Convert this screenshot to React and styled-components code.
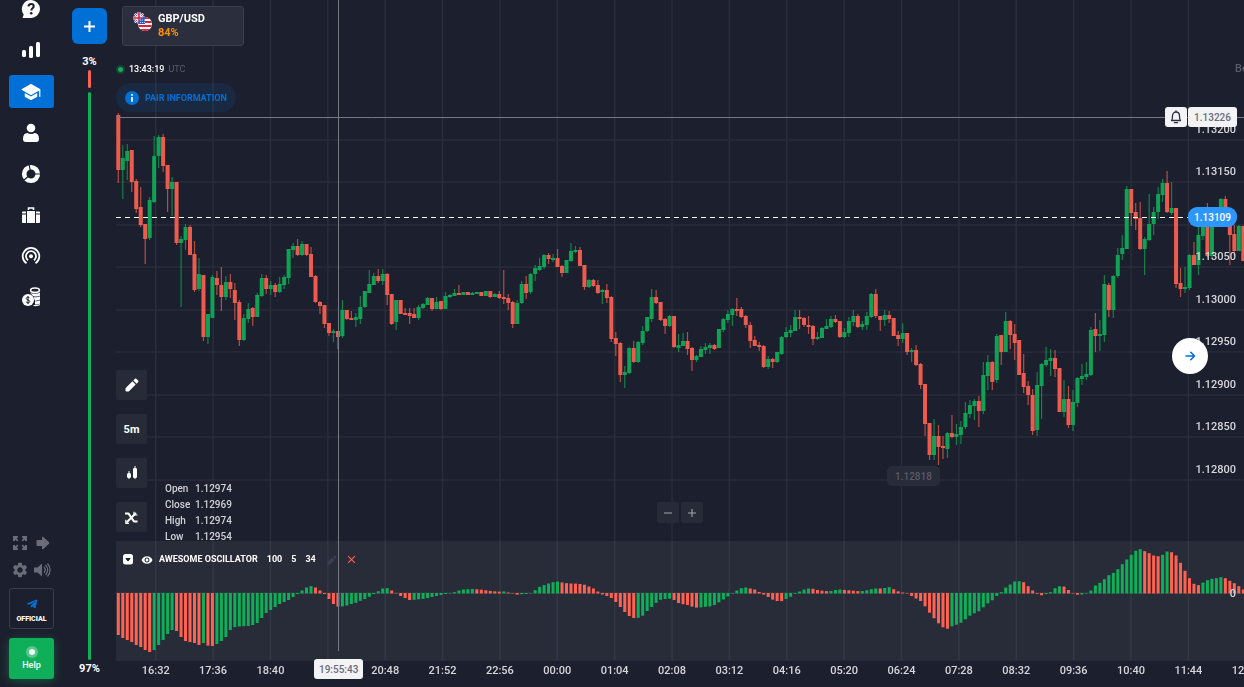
import React from 'react';
import styled, { createGlobalStyle } from 'styled-components';
import { MdClose, MdSettings, MdVisibility } from 'react-icons/md';
import { FaTelegramPlane } from 'react-icons/fa';
import { IoSchool } from 'react-icons/io5';

const colors = {
  bg: '#1c1f2d',
  blue: '#0070d6',
  green: '#0faf59',
  red: '#ff6251',
  muted: '#6a6d78',
  grid: '#2a2d3a',
  label: '#d6d7da',
};

// candle: [open, close, high, low], measured down from the top of the chart
const candles = [
  [115, 170, 113, 183], [170, 158, 145, 199], [161, 151, 144, 180], [150, 182, 150, 192], [181, 209, 179, 213],
  [207, 225, 187, 227], [224, 239, 224, 264], [238, 200, 197, 240], [202, 156, 136, 203], [156, 137, 135, 168],
  [137, 166, 134, 172], [165, 189, 165, 212], [189, 182, 177, 216], [182, 243, 182, 245], [243, 239, 236, 307],
  [240, 227, 224, 250], [227, 255, 225, 255], [254, 290, 241, 292], [289, 274, 258, 291], [275, 337, 275, 341],
  [337, 314, 314, 344], [318, 277, 275, 318], [278, 285, 271, 295], [285, 297, 267, 311], [297, 282, 276, 300],
  [282, 289, 274, 298], [290, 303, 283, 320], [302, 340, 300, 346], [340, 318, 314, 341], [319, 309, 303, 323],
  [308, 317, 307, 326], [317, 295, 293, 317], [296, 278, 274, 297], [278, 289, 275, 294], [289, 285, 281, 295],
  [285, 292, 283, 297], [292, 284, 277, 293], [285, 277, 275, 289], [278, 249, 249, 284], [250, 246, 243, 258],
  [246, 255, 239, 256], [255, 244, 241, 256], [244, 255, 244, 256], [254, 277, 247, 277], [276, 302, 275, 303],
  [302, 306, 301, 314], [305, 324, 305, 328], [323, 333, 323, 336], [333, 331, 329, 342], [331, 337, 331, 349],
  [336, 310, 300, 338], [310, 319, 310, 320], [318, 320, 311, 320], [320, 317, 313, 327], [319, 307, 296, 324],
  [307, 291, 291, 308], [293, 284, 270, 293], [285, 276, 273, 285], [276, 281, 269, 283], [281, 274, 269, 285],
  [274, 295, 273, 305], [294, 324, 294, 325], [322, 300, 300, 330], [300, 314, 300, 314], [313, 315, 308, 315],
  [313, 316, 308, 324], [314, 318, 308, 318], [318, 307, 305, 320], [308, 304, 303, 309], [305, 298, 297, 305],
  [298, 309, 298, 311], [309, 302, 297, 309], [301, 309, 301, 310], [309, 296, 292, 309], [297, 295, 294, 298],
  [296, 293, 289, 296], [293, 295, 285, 295], [295, 292, 292, 295], [292, 295, 292, 295], [295, 293, 292, 295],
  [294, 292, 292, 294], [292, 296, 292, 296], [296, 291, 291, 296], [291, 297, 291, 298], [297, 294, 293, 297],
  [294, 298, 291, 299], [297, 299, 270, 304], [298, 303, 294, 310], [302, 324, 301, 328], [324, 303, 300, 324],
  [303, 284, 281, 304], [284, 293, 276, 299], [292, 274, 273, 294], [274, 268, 265, 281], [270, 266, 258, 271],
  [267, 255, 254, 269], [255, 259, 253, 264], [260, 258, 254, 262], [258, 267, 249, 267], [266, 273, 265, 277],
  [273, 260, 260, 273], [261, 251, 243, 262], [252, 250, 246, 253], [250, 266, 247, 266], [265, 287, 265, 290],
  [287, 280, 279, 288], [280, 286, 279, 287], [285, 293, 280, 294], [292, 290, 289, 304], [290, 298, 284, 303],
  [297, 339, 296, 342], [338, 344, 332, 356], [343, 375, 342, 382], [375, 372, 366, 388], [373, 348, 347, 374],
  [348, 362, 341, 363], [362, 342, 341, 363], [343, 331, 326, 345], [331, 317, 317, 332], [319, 297, 289, 322],
  [297, 303, 290, 304], [302, 320, 302, 321], [319, 326, 318, 334], [326, 316, 315, 327], [316, 347, 316, 348],
  [348, 345, 334, 352], [346, 341, 333, 346], [341, 349, 332, 355], [348, 360, 347, 371], [360, 356, 355, 362],
  [357, 349, 346, 357], [350, 347, 343, 354], [348, 345, 343, 354], [345, 349, 344, 350], [348, 329, 329, 348],
  [330, 319, 318, 332], [320, 314, 310, 323], [315, 309, 308, 326], [309, 311, 298, 316], [309, 317, 307, 318],
  [316, 325, 315, 328], [325, 341, 322, 348], [340, 346, 336, 346], [345, 347, 342, 351], [346, 367, 345, 368],
  [367, 359, 356, 369], [359, 362, 358, 368], [362, 352, 352, 363], [354, 337, 336, 355], [337, 332, 327, 338],
  [333, 330, 325, 337], [331, 317, 310, 331], [317, 319, 310, 329], [318, 325, 317, 327], [325, 327, 316, 334],
  [326, 339, 325, 345], [339, 337, 332, 340], [338, 328, 327, 338], [329, 326, 319, 329], [327, 319, 316, 328],
  [319, 322, 315, 323], [321, 337, 321, 338], [337, 332, 328, 338], [333, 321, 317, 337], [322, 316, 310, 326],
  [316, 327, 314, 328], [327, 324, 321, 330], [325, 316, 312, 330], [317, 294, 293, 318], [294, 316, 289, 318],
  [316, 320, 316, 331], [320, 315, 310, 326], [315, 319, 311, 323], [318, 336, 318, 336], [335, 339, 331, 346],
  [339, 333, 323, 343], [333, 352, 333, 355], [352, 350, 348, 362], [350, 365, 345, 366], [364, 385, 363, 389],
  [384, 424, 384, 436], [423, 455, 423, 460], [455, 436, 419, 460], [436, 447, 425, 465], [446, 448, 436, 459],
  [449, 433, 432, 458], [433, 437, 415, 438], [437, 434, 424, 445], [435, 427, 421, 444], [427, 413, 402, 429],
  [414, 405, 400, 418], [406, 401, 399, 420], [401, 411, 396, 427], [411, 375, 362, 414], [376, 362, 355, 390],
  [362, 382, 361, 390], [380, 336, 334, 383], [335, 352, 335, 365], [352, 321, 312, 352], [321, 335, 320, 349],
  [334, 343, 324, 360], [340, 375, 340, 375], [373, 387, 354, 393], [386, 395, 381, 405], [395, 431, 389, 435],
  [430, 385, 372, 436], [386, 364, 363, 419], [365, 360, 347, 367], [361, 358, 349, 376], [358, 369, 350, 377],
  [368, 412, 368, 412], [412, 399, 380, 417], [399, 425, 386, 428], [425, 402, 390, 431], [403, 378, 377, 407],
  [379, 376, 364, 385], [377, 374, 362, 380], [375, 330, 327, 376], [329, 336, 313, 352], [336, 334, 320, 351],
  [335, 284, 275, 342], [285, 310, 283, 317], [310, 276, 275, 318], [276, 255, 248, 278], [254, 248, 235, 260],
  [249, 189, 186, 249], [189, 213, 189, 226], [212, 219, 203, 230], [218, 249, 202, 250], [249, 239, 237, 275],
  [240, 224, 194, 241], [224, 212, 207, 235], [212, 194, 187, 219], [195, 183, 179, 202], [183, 212, 171, 213],
  [213, 208, 182, 215], [208, 284, 208, 288], [283, 289, 268, 297], [289, 287, 267, 293], [288, 255, 254, 290],
  [255, 265, 242, 265], [265, 235, 226, 275], [236, 216, 210, 240], [211, 256, 203, 257], [256, 212, 210, 257],
  [213, 217, 207, 220], [217, 199, 198, 220], [199, 220, 196, 225], [220, 235, 214, 265], [234, 251, 225, 256],
  [251, 226, 225, 251], [226, 261, 226, 261],
];

const oscillator = [
  -42, -45, -47, -49, -52, -54, -57, -59, -57, -52, -47, -41, -37, -38, -44, -48, -49, -50, -52, -50,
  -52.6, -53, -51, -48, -44, -37, -34, -33.5, -33.2, -33, -32, -30, -25, -20, -17, -14, -11, -9, -7, -4,
  -1, 3, 6, 7.4, 6, 3, -1, -6, -11, -13.6, -13.4, -12.5, -11, -9.8, -7.8, -6, -3.7, -1, 2.3, 5,
  5.4, 3, -0.2, -3, -5, -7, -6.8, -6.3, -5.9, -5, -4, -3, -2, -1, -0.2, 1.3, 3, 4, 4.3, 4.6,
  4.2, 3.8, 3.2, 2.6, 2.2, 1.9, 2.1, 1, 0.2, -1.7, -1.2, -1, -0.3, 3.3, 6.6, 8.5, 10, 11.3, 12, 11,
  10.3, 10, 9.9, 9.5, 8.8, 7, 5, 2, -1.5, -3, -5, -9, -14, -19, -23, -25, -24.9, -22.7, -18, -14,
  -9.8, -6.8, -6, -5.7, -7, -10, -11.2, -12, -13.6, -14.6, -14.3, -13.8, -13.4, -12, -9.3, -6.5, -3.5, 0.2, 3, 5.3,
  6, 5, 4, 1.5, -1.6, -4, -6.6, -8, -8.1, -6, -3.7, -0.8, 2, 4, 5, 4.7, 3.5, 2.8, 2.4, 2.5,
  3.5, 4, 3.6, 3.2, 2.8, 2.4, 2.5, 3.2, 4.3, 5.1, 5, 5.5, 6.3, 4.3, 2.2, 1, -0.4, -3, -5.5, -8,
  -13.3, -19.7, -25.3, -30.3, -34.3, -35.7, -33.3, -31.7, -29.7, -26.3, -22.7, -20.3, -18.3, -14.3, -10.3, -7.3, -3, 1.3, 6, 9,
  12, 12.3, 11.3, 7.3, 3, -0.8, -2.3, -1, 1.3, 5.3, 7.3, 7, 3.5, -0.4, -1.7, -1.5, 0.1, 3, 8, 10.7,
  14.3, 18.3, 20.7, 24.3, 29.3, 34, 38.7, 42.7, 44.3, 42.3, 40.3, 38, 37.3, 38.7, 42, 41.3, 38, 30.7, 22.7, 15.3,
  9.7, 8.3, 11, 13.3, 14.7, 15.3, 16.3, 15.3, 12.7, 10.3, 7.3, 4,
];

const times = [
  '16:32', '17:36', '18:40', '', '20:48', '21:52', '22:56', '00:00', '01:04', '02:08',
  '03:12', '04:16', '05:20', '06:24', '07:28', '08:32', '09:36', '10:40', '11:44', '12:48',
];

const prices = [
  { y: 129, text: '1.13200' },
  { y: 171, text: '1.13150' },
  { y: 256, text: '1.13050' },
  { y: 299, text: '1.13000' },
  { y: 341, text: '1.12950' },
  { y: 384, text: '1.12900' },
  { y: 426, text: '1.12850' },
  { y: 469, text: '1.12800' },
];

const gridRows = [140, 182, 225, 267, 310, 352, 395, 437, 480];

const candleX = (i) => 2.3 + i * 4.482;
const timeX = (i) => 39.7 + i * 57.37;

const GlobalStyle = createGlobalStyle`
  * {
    box-sizing: border-box;
  }

  body {
    margin: 0;
    background: ${colors.bg};
    color: #fff;
    font-family: Roboto, "Liberation Sans", sans-serif;
  }

  button {
    font-family: inherit;
    color: inherit;
    padding: 0;
    border: 0;
    cursor: pointer;
  }
`;

const Page = styled.div`
  display: flex;
  min-height: 100vh;
  overflow: hidden;
`;

const Sidebar = styled.aside`
  width: 63px;
  padding: 0 9px 8px;
  display: flex;
  flex-direction: column;
  justify-content: space-between;
`;

const Nav = styled.nav`
  display: flex;
  flex-direction: column;
  gap: 8px;
  margin-top: -7px;
`;

const NavLink = styled.a`
  height: 33px;
  padding-right: 2px;
  display: flex;
  align-items: center;
  justify-content: center;
  border-radius: 3px;
  color: #fff;
  background: ${(p) => (p.$active ? colors.blue : 'transparent')};
`;

const SideFooter = styled.div`
  display: flex;
  flex-direction: column;
  gap: 9px;
`;

const QuickActions = styled.div`
  display: grid;
  grid-template-columns: 22px 23px;
  grid-auto-rows: 27px;
  margin-bottom: -4px;
`;

const QuickButton = styled.button`
  display: flex;
  align-items: center;
  justify-content: center;
  background: none;
  color: ${colors.muted};
`;

const OfficialLink = styled.a`
  height: 41px;
  display: flex;
  flex-direction: column;
  align-items: center;
  justify-content: flex-end;
  gap: 4px;
  padding-bottom: 4px;
  border: 1px solid #3a3d4a;
  border-radius: 3px;
  color: #fff;
  font-size: 7px;
  line-height: 10px;
  font-weight: 900;
  text-decoration: none;
`;

const HelpButton = styled.button`
  height: 41px;
  display: flex;
  flex-direction: column;
  align-items: center;
  justify-content: center;
  gap: 1px;
  border-radius: 3px;
  background: ${colors.green};
  box-shadow: 0 2px 10px rgba(15, 175, 89, 0.4);
  font-size: 9px;
  line-height: 12px;
  font-weight: 500;
`;

const HelpDot = styled.span`
  width: 12px;
  height: 12px;
  border: 3px solid rgba(255, 255, 255, 0.3);
  border-radius: 50%;
  background: #fff;
  background-clip: padding-box;
`;

const Sentiment = styled.section`
  width: 53px;
  padding: 8px 0 12px 9px;
  display: flex;
  flex-direction: column;
`;

const AddButton = styled.button`
  width: 35px;
  height: 36px;
  display: flex;
  align-items: center;
  justify-content: center;
  border-radius: 6px;
  background: ${colors.blue};
`;

const SentimentBody = styled.div`
  width: 35px;
  margin-top: 11px;
  flex: 1;
  display: flex;
  flex-direction: column;
  align-items: center;
`;

const Percent = styled.span`
  font-size: 11px;
  line-height: 13px;
  font-weight: 700;
`;

const SentimentBar = styled.div`
  width: 3px;
  flex: ${(p) => p.$share};
  margin-top: ${(p) => (p.$first ? '2px' : '4px')};
  margin-bottom: ${(p) => (p.$first ? '0' : '2px')};
  border-radius: 2px;
  background: ${(p) => p.$color};
`;

const Chart = styled.main`
  position: relative;
  flex: 1;
  min-width: 0;
  display: grid;
  grid-template-columns: minmax(0, 1fr);
  grid-template-rows: 1fr 120px 26px;
  overflow: hidden;
`;

const Plot = styled.svg`
  position: absolute;
  inset: 0;
  width: 100%;
  height: 100%;

  text {
    font-size: 11px;
    font-weight: 500;
    fill: ${colors.label};
  }
`;

const Crosshair = styled(Plot)`
  pointer-events: none;
`;

const PricePane = styled.section`
  position: relative;
  display: flex;
  flex-direction: column;
  align-items: flex-start;
`;

const PairCard = styled.button`
  width: 122px;
  height: 40px;
  margin: 6px 0 0 6px;
  padding: 5px 0 0 10px;
  display: flex;
  align-items: flex-start;
  gap: 5px;
  border: 1px solid #3b3e4c;
  border-radius: 3px;
  background: #2b2f3d;
  text-align: left;
`;

const PairText = styled.span`
  display: flex;
  flex-direction: column;
  font-size: 11px;
  line-height: 14px;
  font-weight: 700;
`;

const Payout = styled.span`
  color: #ff8f00;
`;

const Clock = styled.div`
  display: flex;
  align-items: center;
  gap: 4px;
  margin-top: 17px;
  font-size: 9px;
  line-height: 13px;
  font-weight: 500;
`;

const LiveDot = styled.span`
  width: 9px;
  height: 9px;
  border: 2px solid rgba(15, 175, 89, 0.25);
  border-radius: 50%;
  background: ${colors.green};
  background-clip: padding-box;
`;

const Zone = styled.span`
  color: #5a5d69;
  font-weight: 400;
`;

const InfoButton = styled.button`
  height: 29px;
  margin-top: 7px;
  padding: 0 9px;
  display: flex;
  align-items: center;
  gap: 6px;
  border-radius: 15px;
  background: rgba(0, 112, 214, 0.12);
  color: ${colors.blue};
  font-size: 9px;
  font-weight: 700;
`;

const PaneFooter = styled.div`
  margin-top: auto;
  display: flex;
  align-items: flex-end;
  gap: 18px;
`;

const Tools = styled.div`
  display: flex;
  flex-direction: column;
  gap: 14px;
  padding-bottom: 9px;
`;

const ToolButton = styled.button`
  width: 31px;
  height: 30px;
  display: flex;
  align-items: center;
  justify-content: center;
  border-radius: 2px;
  background: #272a37;
  font-size: 11px;
  font-weight: 700;
`;

const Quote = styled.dl`
  display: grid;
  grid-template-columns: 30px auto;
  margin: 0 0 -4px;
  color: #d0d1d5;
  font-size: 10px;
  line-height: 16px;
  font-weight: 500;

  dt,
  dd {
    margin: 0;
  }
`;

const ZoomControls = styled.div`
  position: absolute;
  left: 50%;
  bottom: 18px;
  transform: translateX(-50%);
  display: flex;
  gap: 2px;
`;

const ZoomButton = styled.button`
  width: 22px;
  height: 21px;
  display: flex;
  align-items: center;
  justify-content: center;
  border-radius: 2px;
  background: #272a37;
  color: #a4a6ad;
`;

const IndicatorPane = styled.section`
  position: relative;
  background: rgba(255, 255, 255, 0.055);
`;

const IndicatorHeader = styled.header`
  display: flex;
  align-items: center;
  padding: 12px 7px 0;
  font-size: 9px;
  line-height: 13px;
  font-weight: 700;
`;

const HeaderButton = styled.button`
  width: 18px;
  height: 13px;
  display: flex;
  align-items: center;
  background: none;
  color: ${(p) => p.$color || '#fff'};
`;

const Params = styled.span`
  display: flex;
  gap: 9px;
  margin: 0 11px 0 9px;
`;

const Tag = styled.span`
  height: 20px;
  padding: 0 6px;
  display: flex;
  align-items: center;
  border-radius: 3px;
  background: #f3f3f5;
  color: #6a6c7a;
  font-size: 10px;
  font-weight: 500;
`;

const Alert = styled.div`
  position: absolute;
  top: 107px;
  right: 7px;
  display: flex;
  gap: 1px;
`;

const AlertButton = styled.button`
  width: 22px;
  height: 20px;
  display: flex;
  align-items: center;
  justify-content: center;
  border-radius: 3px;
  background: #f3f3f5;
  color: #2b2e40;
`;

const CurrentPrice = styled(Tag)`
  position: absolute;
  top: 207px;
  right: 7px;
  border-radius: 9px;
  background: #2e97ff;
  color: #fff;
`;

const LowPrice = styled(Tag)`
  position: absolute;
  top: 466px;
  left: 771px;
  padding: 0 8px;
  border-radius: 5px;
  background: #282b3a;
  color: #585b68;
`;

const TimeTag = styled(Tag)`
  position: absolute;
  bottom: 8px;
  left: 198px;
  padding: 0 5px;
`;

const ScrollButton = styled.button`
  position: absolute;
  top: 338px;
  right: 36px;
  width: 36px;
  height: 36px;
  display: flex;
  align-items: center;
  justify-content: center;
  border-radius: 50%;
  background: #fff;
  color: ${colors.blue};
`;

const QuestionIcon = () => (
  <svg width="20" height="20" viewBox="0 0 20 20">
    <path d="M10 0a9 9 0 1 1 0 18H1.5l1.2-3.6A9 9 0 0 1 10 0z" fill="#fff" />
    <path d="M7.5 6.6c0-1.7 1.1-2.6 2.6-2.6s2.6.9 2.6 2.3c0 2-2.4 2.1-2.4 4.3" fill="none" stroke={colors.bg} strokeWidth="2" />
    <circle cx="10.2" cy="13.2" r="1.3" fill={colors.bg} />
  </svg>
);

const BarsIcon = () => (
  <svg width="20" height="20" viewBox="0 0 20 20" fill="#fff">
    <rect x="1" y="9" width="4" height="7" rx="1.5" />
    <rect x="8" y="5" width="4" height="12" rx="1.5" />
    <rect x="15" y="1" width="4" height="15" rx="1.5" />
  </svg>
);

const PersonIcon = () => (
  <svg width="18" height="20" viewBox="0 0 18 20" fill="#fff">
    <circle cx="9" cy="5" r="4.3" />
    <path d="M1 16c0-4 1.6-6 4.3-6 1 .6 2.3 1 3.7 1s2.7-.4 3.7-1C15.4 10 17 12 17 16c0 2-1 3-2.5 3h-11C2 19 1 18 1 16z" />
  </svg>
);

const DonutIcon = () => (
  <svg width="20" height="20" viewBox="0 0 20 20">
    <circle cx="10" cy="10" r="6.8" fill="none" stroke="#fff" strokeWidth="4.6" />
    <path d="M10 10h10M10 10 3 16M10 10 8 0" stroke={colors.bg} strokeWidth="1.2" />
  </svg>
);

const LuggageIcon = () => (
  <svg width="20" height="18" viewBox="0 0 20 18" fill="#fff">
    <path d="M6 5h8v12H6z" />
    <path d="M7.5 4V2h5v2" fill="none" stroke="#fff" strokeWidth="1.6" />
    <path d="M1 8.5h4V17H2c-.6 0-1-.4-1-1zM19 8.5h-4V17h3c.6 0 1-.4 1-1zM2 5.500h3v2H1v-1c0-.6.4-1 1-1zM18 5.5h-3v2h4v-1c0-.6-.4-1-1-1z" />
  </svg>
);

const SignalIcon = () => (
  <svg width="20" height="20" viewBox="0 0 20 20" fill="none" stroke="#fff" strokeWidth="1.8">
    <path d="M5.5 17.2a8.3 8.3 0 1 1 9 0" />
    <path d="M7 14.2a5 5 0 1 1 6 0" />
    <circle cx="10" cy="10.2" r="2" fill="#fff" stroke="none" />
  </svg>
);

const CoinsIcon = () => (
  <svg width="20" height="20" viewBox="0 0 20 20">
    <ellipse cx="14" cy="3.2" rx="4.4" ry="2.2" fill="none" stroke="#fff" strokeWidth="1.6" />
    <path d="M9 5.5c2 1.6 8 1.6 10 0v3c-1.5 1.3-5 1.4-7 .6zM12.5 10.2c2.5.3 5 0 6.5-1v3.400c-1 .8-3 1.200-5 1.100zM14 14.200c2 0 4-.3 5-1v3.300c-1 .8-3 1.200-5 1.100zM13 18c2.500.2 4.800 0 6-1v1c-1 1-4 1.400-7 1z" fill="#fff" />
    <circle cx="7" cy="13" r="6" fill="#fff" />
    <path d="M8.7 11.2c-.4-.7-1-1-1.7-1-1 0-1.8.5-1.8 1.3 0 1.8 3.6 1 3.6 2.9 0 .9-.8 1.4-1.8 1.4-.8 0-1.5-.3-1.9-1M7 9v8" fill="none" stroke={colors.bg} strokeWidth="1" />
  </svg>
);

const ExpandIcon = () => (
  <svg width="14" height="14" viewBox="0 0 14 14" fill="currentColor">
    <path d="M0 0h5v1.6l-1.3.9 1.8 1.8-1.2 1.2-1.8-1.8L1.6 5H0zM14 0H9v1.6l1.3.9-1.8 1.8 1.2 1.2 1.8-1.8.9 1.3H14zM0 14h5v-1.6l-1.3-.9 1.8-1.8-1.2-1.2-1.8 1.8L1.6 9H0zM14 14H9v-1.6l1.3-.9-1.8-1.8 1.2-1.2 1.8 1.8.9-1.3H14z" />
  </svg>
);

const FatArrowIcon = () => (
  <svg width="14" height="14" viewBox="0 0 14 14" fill="currentColor">
    <path d="M1.5 4H6V1.5c0-.7.8-1 1.3-.5l5.7 5.3c.4.4.4 1 0 1.4L7.3 13c-.5.5-1.3.2-1.3-.5V10H1.5C1 10 .5 9.5.5 9V5c0-.5.5-1 1-1z" />
  </svg>
);

const VolumeIcon = () => (
  <svg width="17" height="14" viewBox="0 0 17 14">
    <path d="M0 4.500h3.500L8 .5v13L3.500 9.500H0z" fill="currentColor" />
    <path d="M10 4.200c1.400 1.600 1.400 4 0 5.600M11.500 2c2.800 2.800 2.800 7.200 0 10M13.500.5c3.400 3.800 3.400 9.200 0 13" fill="none" stroke="currentColor" strokeWidth="1.2" />
  </svg>
);

const PlusIcon = ({ size = 11, stroke = 2 }) => (
  <svg width={size} height={size} viewBox="0 0 11 11">
    <path d="M5.5 0v11M0 5.5h11" stroke="currentColor" strokeWidth={stroke} />
  </svg>
);

const MinusIcon = () => (
  <svg width="8" height="8" viewBox="0 0 8 8">
    <path d="M0 4h8" stroke="currentColor" />
  </svg>
);

const PencilIcon = ({ size = 14 }) => (
  <svg width={size} height={size} viewBox="0 0 14 14" fill="currentColor">
    <path d="M.5 10.2 7.4 3.3l3.3 3.3-6.9 6.9H1.5c-.6 0-1-.4-1-1zM8.3 2.4 9.8.9c.5-.5 1.2-.5 1.7 0l1.6 1.6c.5.5.5 1.2 0 1.7l-1.5 1.5z" />
  </svg>
);

const CandlesIcon = () => (
  <svg width="12" height="14" viewBox="0 0 12 14" fill="#fff">
    <rect x="1" y="7" width="4" height="5" rx="1.5" />
    <rect x="2.5" y="5" width="1" height="8" />
    <rect x="7" y="2" width="4" height="10" rx="1.2" />
    <rect x="8.5" y="0" width="1" height="13" />
  </svg>
);

const IndicatorsIcon = () => (
  <svg width="13" height="13" viewBox="0 0 13 13" fill="none" stroke="#fff">
    <path d="M0 2.5h3.5L9 10.5h3.5" strokeWidth="2.2" strokeLinejoin="round" />
    <path d="M1.500 11.500 11 2" strokeWidth="2" />
    <path d="M9 .8v3.200h3.500M.8 8.800v3.500h3.200" strokeWidth="1.200" />
  </svg>
);

const CollapseIcon = () => (
  <svg width="11" height="11" viewBox="0 0 11 11">
    <rect width="10" height="10.5" rx="2.5" fill="#fff" />
    <path d="M3 4.500h4L5 7z" fill={colors.bg} stroke={colors.bg} strokeLinejoin="round" />
  </svg>
);

const BellIcon = () => (
  <svg width="14" height="14" viewBox="0 0 14 14" fill="none" stroke="currentColor" strokeWidth="1.3" strokeLinejoin="round">
    <path d="M7 .8V2M2.500 10.500c.8-.8 1-1.500 1-4.500C3.500 3.500 5 2 7 2s3.500 1.500 3.500 4c0 3 .2 3.700 1 4.500zM5.500 12.700h3" strokeLinecap="round" />
  </svg>
);

const ArrowIcon = () => (
  <svg width="11" height="10" viewBox="0 0 11 10" fill="none" stroke="currentColor" strokeWidth="1.6">
    <path d="M1 5h8.500M5.800 1.300 9.500 5 5.800 8.700" strokeLinecap="round" strokeLinejoin="round" />
  </svg>
);

const InfoIcon = () => (
  <svg width="14" height="14" viewBox="0 0 14 14">
    <circle cx="7" cy="7" r="7" fill={colors.blue} />
    <path d="M7 6v4.800M7 3v1.700" stroke="#fff" strokeWidth="1.7" />
  </svg>
);

const FlagsIcon = () => (
  <svg width="20" height="20" viewBox="0 0 20 20">
    <clipPath id="uk"><circle cx="6" cy="6" r="6" /></clipPath>
    <clipPath id="us"><circle cx="12" cy="12" r="7" /></clipPath>
    <g clipPath="url(#uk)">
      <path d="M0 0h12v12H0z" fill="#2a4a9c" />
      <path d="M0 0l12 12M12 0 0 12" stroke="#fff" strokeWidth="2.2" />
      <path d="M0 0l12 12M12 0 0 12" stroke="#d8213b" strokeWidth=".8" />
      <path d="M6 0v12M0 6h12" stroke="#fff" strokeWidth="3.2" />
      <path d="M6 0v12M0 6h12" stroke="#d8213b" strokeWidth="1.6" />
    </g>
    <g clipPath="url(#us)">
      <path d="M5 5h15v14H5z" fill="#fff" />
      <path d="M5 6h15M5 10h15M5 14h15M5 18h15" stroke="#d8213b" strokeWidth="2" />
      <path d="M5 5h7v7H5z" fill="#2560c8" />
      <path d="M7 8h5M7 10.500h5" stroke="#fff" strokeWidth=".8" strokeDasharray="1 1" />
    </g>
  </svg>
);

const navItems = [
  { label: 'Support', icon: <QuestionIcon /> },
  { label: 'Trading', icon: <BarsIcon /> },
  { label: 'Education', icon: <IoSchool size={20} />, active: true },
  { label: 'Profile', icon: <PersonIcon /> },
  { label: 'Statistics', icon: <DonutIcon /> },
  { label: 'Market', icon: <LuggageIcon /> },
  { label: 'Signals', icon: <SignalIcon /> },
  { label: 'Finance', icon: <CoinsIcon /> },
];

const PriceChart = () => (
  <Plot>
    <g stroke={colors.grid} strokeWidth="1.5">
      {gridRows.map((y) => (
        <line key={y} x1="0" x2="100%" y1={y} y2={y} />
      ))}
      {times.map((time, i) => (
        <line key={i} x1={timeX(i)} x2={timeX(i)} y1="0" y2="660" />
      ))}
    </g>
    <g opacity="0.92">
      {candles.map(([open, close, high, low], i) => (
        <g key={i} fill={close < open ? colors.green : colors.red}>
          <rect x={candleX(i) - 0.6} y={high} width="1.2" height={low - high} opacity="0.75" />
          <rect x={candleX(i) - 2} y={Math.min(open, close)} width="4" height={Math.abs(close - open)} />
        </g>
      ))}
    </g>
    <line x1="0" x2="100%" y1="117.5" y2="117.5" stroke="#777982" />
    <svg width="100%" x="-7">
      <line x1="7" x2="100%" y1="217.5" y2="217.5" stroke="#fff" strokeDasharray="5 4" />
    </svg>
    {prices.map(({ y, text }) => (
      <text key={text} x="100%" dx="-8" y={y + 4} textAnchor="end">{text}</text>
    ))}
    <text x="100%" dx="-9" y="72" style={{ fill: '#5a5d69' }}>Be</text>
    {times.map((time, i) => time && (
      <text key={i} x={timeX(i)} y="674" textAnchor="middle">{time}</text>
    ))}
  </Plot>
);

const OscillatorChart = () => (
  <Plot>
    <line x1="0" x2="100%" y1="52" y2="52" stroke="#3b3e4a" />
    {oscillator.map((value, i) => {
      const rising = i > 0 && value > oscillator[i - 1];
      return (
        <rect
          key={i}
          x={candleX(i) - 1.5}
          y={value > 0 ? 52.5 - value : 52}
          width="3"
          height={Math.max(Math.abs(value), 0.5)}
          fill={rising ? colors.green : colors.red}
        />
      );
    })}
    <text x="100%" dx="-8" y="56" textAnchor="end">0</text>
  </Plot>
);

const App = () => {
  return (
    <Page>
      <GlobalStyle />
      <Sidebar>
        <Nav>
          {navItems.map((item) => (
            <NavLink key={item.label} href="#" aria-label={item.label} $active={item.active}>
              {item.icon}
            </NavLink>
          ))}
        </Nav>
        <SideFooter>
          <QuickActions>
            <QuickButton aria-label="Fullscreen"><ExpandIcon /></QuickButton>
            <QuickButton aria-label="Collapse"><FatArrowIcon /></QuickButton>
            <QuickButton aria-label="Settings"><MdSettings size={18} /></QuickButton>
            <QuickButton aria-label="Sound"><VolumeIcon /></QuickButton>
          </QuickActions>
          <OfficialLink href="#">
            <FaTelegramPlane size={12} color={colors.blue} />
            OFFICIAL
          </OfficialLink>
          <HelpButton>
            <HelpDot />
            Help
          </HelpButton>
        </SideFooter>
      </Sidebar>

      <Sentiment>
        <AddButton aria-label="Add asset"><PlusIcon /></AddButton>
        <SentimentBody>
          <Percent>3%</Percent>
          <SentimentBar $share={3} $color={colors.red} $first />
          <SentimentBar $share={97} $color={colors.green} />
          <Percent>97%</Percent>
        </SentimentBody>
      </Sentiment>

      <Chart>
        <PriceChart />
        <PricePane>
          <PairCard>
            <FlagsIcon />
            <PairText>
              GBP/USD
              <Payout>84%</Payout>
            </PairText>
          </PairCard>
          <Clock>
            <LiveDot />
            <span>13:43:19</span>
            <Zone>UTC</Zone>
          </Clock>
          <InfoButton>
            <InfoIcon />
            PAIR INFORMATION
          </InfoButton>
          <PaneFooter>
            <Tools>
              <ToolButton aria-label="Drawing"><PencilIcon /></ToolButton>
              <ToolButton>5m</ToolButton>
              <ToolButton aria-label="Chart type"><CandlesIcon /></ToolButton>
              <ToolButton aria-label="Indicators"><IndicatorsIcon /></ToolButton>
            </Tools>
            <Quote>
              <dt>Open</dt>
              <dd>1.12974</dd>
              <dt>Close</dt>
              <dd>1.12969</dd>
              <dt>High</dt>
              <dd>1.12974</dd>
              <dt>Low</dt>
              <dd>1.12954</dd>
            </Quote>
          </PaneFooter>
          <ZoomControls>
            <ZoomButton aria-label="Zoom out"><MinusIcon /></ZoomButton>
            <ZoomButton aria-label="Zoom in"><PlusIcon size={8} stroke={1.5} /></ZoomButton>
          </ZoomControls>
          <Alert>
            <AlertButton aria-label="Set alert"><BellIcon /></AlertButton>
            <Tag>1.13226</Tag>
          </Alert>
          <CurrentPrice>1.13109</CurrentPrice>
          <LowPrice>1.12818</LowPrice>
          <ScrollButton aria-label="Go to latest"><ArrowIcon /></ScrollButton>
        </PricePane>
        <IndicatorPane>
          <OscillatorChart />
          <IndicatorHeader>
            <HeaderButton aria-label="Collapse indicator"><CollapseIcon /></HeaderButton>
            <HeaderButton aria-label="Toggle visibility"><MdVisibility size={12} /></HeaderButton>
            AWESOME OSCILLATOR
            <Params>
              <span>100</span>
              <span>5</span>
              <span>34</span>
            </Params>
            <HeaderButton aria-label="Edit indicator" $color="#3b3e4d"><PencilIcon size={10} /></HeaderButton>
            <HeaderButton aria-label="Remove indicator" $color={colors.red}><MdClose size={13} /></HeaderButton>
          </IndicatorHeader>
        </IndicatorPane>
        <Crosshair>
          <line x1="222.5" x2="222.5" y1="0" y2="651" stroke="#777982" />
        </Crosshair>
        <TimeTag>19:55:43</TimeTag>
      </Chart>
    </Page>
  );
};

export default App;
